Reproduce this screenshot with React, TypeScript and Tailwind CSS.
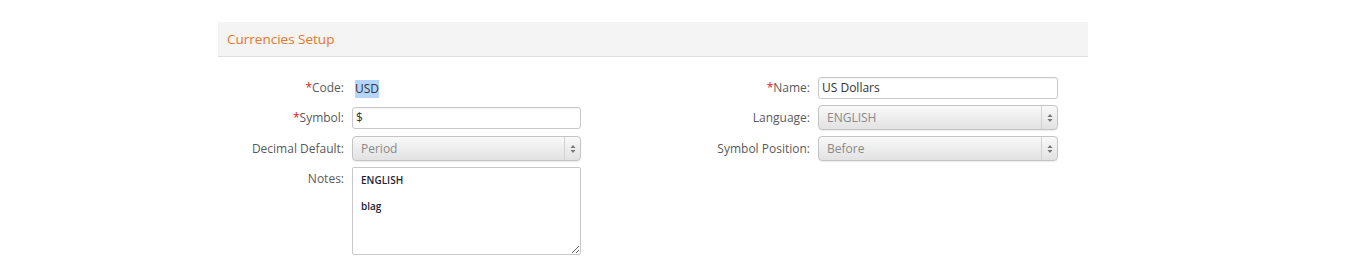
import React from 'react';

/**
 * Small up/down arrows shown at the right end of a select box
 */
function Spinner() {
  return (
    <svg width="6" height="10" viewBox="0 0 6 10" className="text-[#777]">
      <path d="M3 1 L5.5 4 L0.5 4 Z" fill="currentColor" />
      <path d="M3 9 L5.5 6 L0.5 6 Z" fill="currentColor" />
    </svg>
  );
}

function FakeSelect({ value }: { value: string }) {
  return (
    <div className="flex h-[25px] w-full items-stretch rounded-[4px] border border-[#c4c4c4] bg-gradient-to-b from-[#f9f9f9] to-[#e2e2e2] shadow-[0_1px_1px_rgba(0,0,0,0.08)]">
      <div className="flex flex-1 items-center pl-[8px] text-[12px] text-[#8a8a8a]">{value}</div>
      <div className="flex w-[16px] items-center justify-center border-l border-[#d2d2d2]">
        <Spinner />
      </div>
    </div>
  );
}

function Label({ text, required }: { text: string; required?: boolean }) {
  return (
    <div className="flex items-center justify-end text-[12px] text-[#5a5a5a]">
      {required && <span className="text-[#e0161b]">*</span>}
      {text}
    </div>
  );
}

export default function App() {
  return (
    <div className="min-h-[271px] bg-white font-['Open_Sans',sans-serif]">
      <div className="ml-[218px] w-[870px] pt-[22px]">
        <div className="flex h-[35px] items-center border-b border-[#dedede] bg-[#f4f4f4] pl-[9px] text-[13.5px] text-[#e9762b]">
          Currencies Setup
        </div>

        <div className="grid grid-cols-[126px_229px_221px_240px] grid-rows-[22px_25px_25px_auto] gap-x-[8px] gap-y-[6px] pt-[20px]">
          {/* row 1 */}
          <Label text="Code:" required />
          <div className="flex items-center pl-[3px] pt-[1px] text-[12px] text-[#333]">
            <span className="bg-[#b4d5fe]">USD</span>
          </div>
          <Label text="Name:" required />
          <div className="flex h-[22px] items-center rounded-[3px] border border-[#c8c8c8] bg-white pl-[3px] text-[12px] text-[#333] shadow-[inset_0_1px_1px_rgba(0,0,0,0.05)]">
            US Dollars
          </div>

          {/* row 2 */}
          <Label text="Symbol:" required />
          <div className="flex items-center">
            <div className="flex h-[22px] w-full items-center rounded-[3px] border border-[#c8c8c8] bg-white pl-[3px] text-[12px] text-[#333] shadow-[inset_0_1px_1px_rgba(0,0,0,0.05)]">
              $
            </div>
          </div>
          <Label text="Language:" />
          <FakeSelect value="ENGLISH" />

          {/* row 3 */}
          <Label text="Decimal Default:" />
          <FakeSelect value="Period" />
          <Label text="Symbol Position:" />
          <FakeSelect value="Before" />

          {/* row 4 */}
          <div className="pt-[3px] text-right text-[12px] text-[#5a5a5a]">Notes:</div>
          <textarea
            readOnly
            value={'ENGLISH\n\nblag'}
            className="h-[88px] w-full resize rounded-[2px] border border-[#c8c8c8] bg-white px-[8px] pt-[6px] text-[10px] leading-[13px] font-semibold text-[#1f2233] outline-none"
          />
          <div />
          <div />
        </div>
      </div>
    </div>
  );
}
